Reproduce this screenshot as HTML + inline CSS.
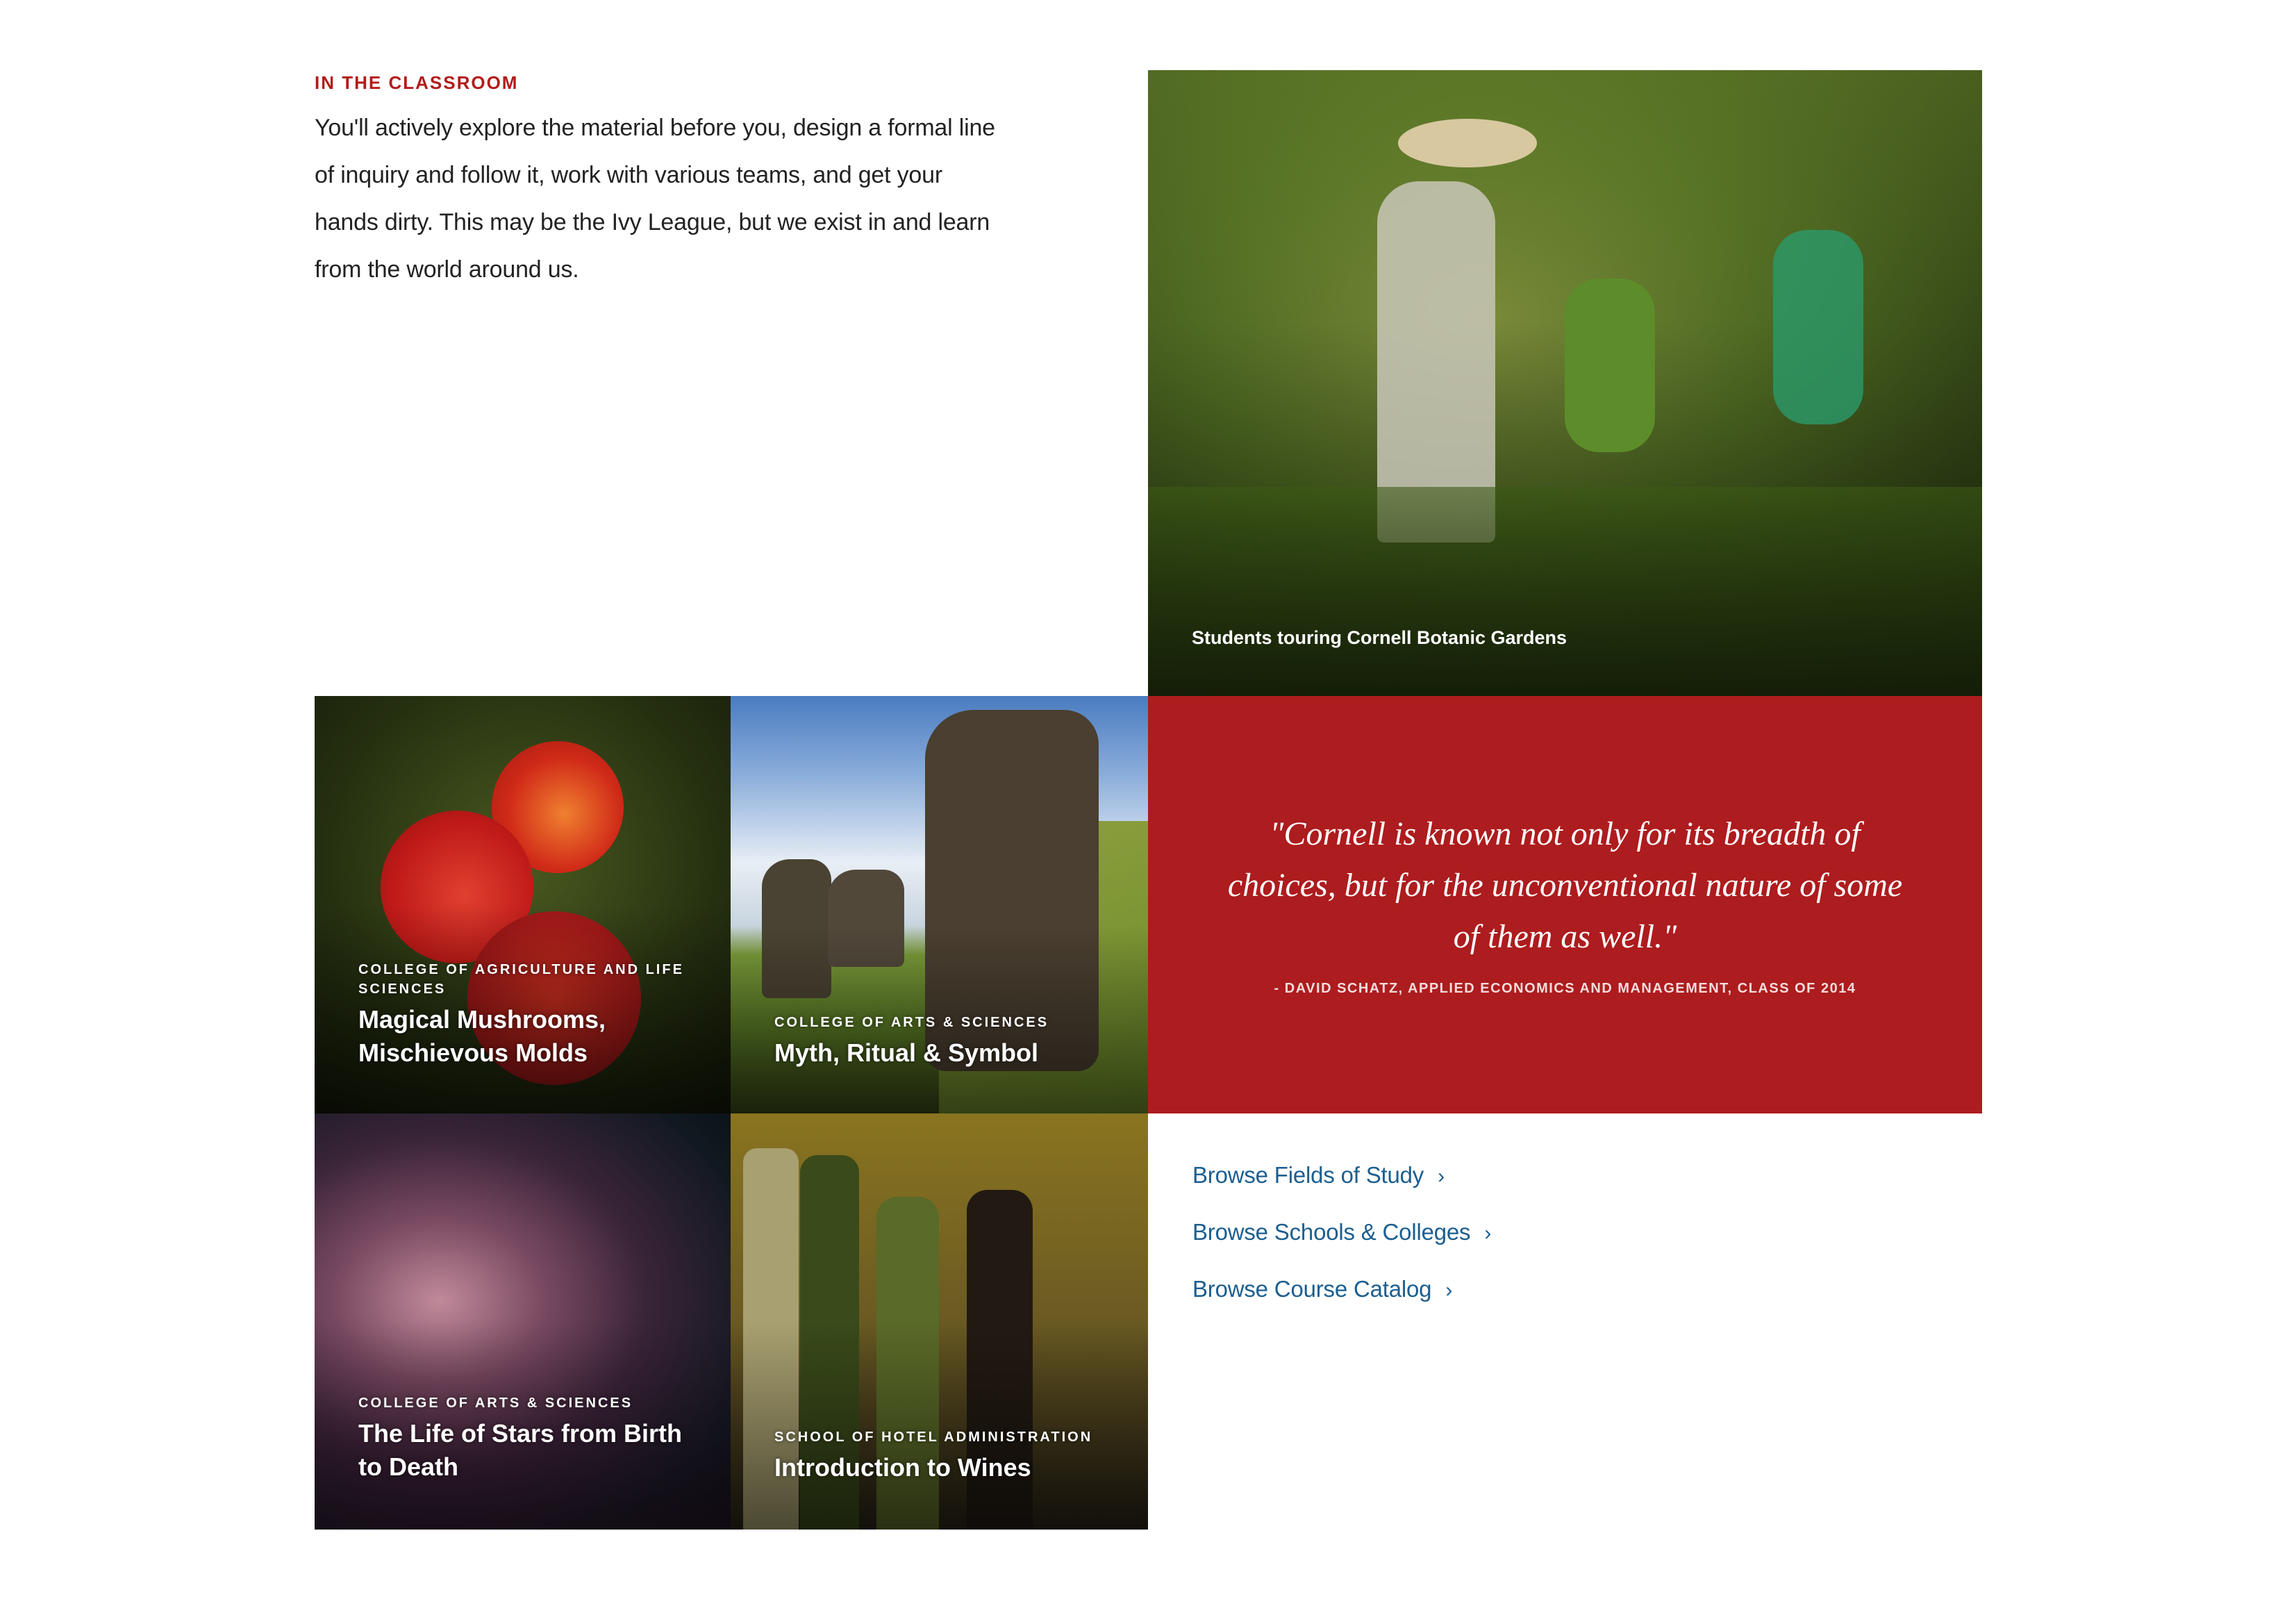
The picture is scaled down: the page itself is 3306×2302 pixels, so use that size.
<!DOCTYPE html>
<html><head><meta charset="utf-8"><style>
*{margin:0;padding:0;box-sizing:border-box}
body{width:3306px;height:2302px;background:#fff;position:relative;overflow:hidden;font-family:"Liberation Sans",sans-serif}
.abs{position:absolute}
.label{left:453px;top:104px;font-size:26px;font-weight:bold;color:#b31b1b;letter-spacing:2px}
.body{left:453px;top:150px;font-size:34px;line-height:68px;color:#222;letter-spacing:-0.2px;white-space:nowrap}
.tile{position:absolute;overflow:hidden}
.cap{position:absolute;left:63px;color:#fff;text-shadow:0 0 6px rgba(0,0,0,.6)}
.cap .s{font-size:20px;font-weight:bold;letter-spacing:3px;line-height:28px}
.cap .t{font-size:36px;font-weight:bold;line-height:48px;margin-top:6px}
.link{left:1717px;font-size:33px;color:#1c5e8f;letter-spacing:-0.2px}
.link span{font-size:30px;margin-left:20px;color:#1c5e8f}
</style></head><body>
<div class="abs label">IN THE CLASSROOM</div>
<div class="abs body">You'll actively explore the material before you, design a formal line<br>of inquiry and follow it, work with various teams, and get your<br>hands dirty. This may be the Ivy League, but we exist in and learn<br>from the world around us.</div>

<div class="tile" style="left:1653px;top:101px;width:1201px;height:901px;background:radial-gradient(ellipse at 40% 40%,#7a8a3a 0%,#4f6a22 40%,#2e3f14 80%,#1f2a0e 100%)">
<div class="abs" style="left:0;top:0;width:1201px;height:901px;background:linear-gradient(180deg,rgba(120,150,50,.4),rgba(0,0,0,0) 40%,rgba(0,0,0,.55))"></div>
<div class="abs" style="left:330px;top:160px;width:170px;height:520px;background:#c9c7b8;border-radius:60px 60px 10px 10px;opacity:.85"></div>
<div class="abs" style="left:360px;top:70px;width:200px;height:70px;background:#d8c8a0;border-radius:50%"></div>
<div class="abs" style="left:600px;top:300px;width:130px;height:250px;background:#5c8d2a;border-radius:50px"></div>
<div class="abs" style="left:900px;top:230px;width:130px;height:280px;background:#2a9a6a;border-radius:50px;opacity:.8"></div>
<div class="abs" style="left:0;top:600px;width:1201px;height:301px;background:linear-gradient(180deg,rgba(60,90,20,.6),rgba(20,30,8,.9))"></div>
<div class="abs" style="left:63px;top:802px;font-size:27px;font-weight:bold;color:#fff">Students touring Cornell Botanic Gardens</div>
</div>

<div class="tile" style="left:453px;top:1002px;width:599px;height:601px;background:radial-gradient(circle at 50% 40%,#4a5a20,#253010 60%,#151a08)">
<div class="abs" style="left:255px;top:65px;width:190px;height:190px;border-radius:50%;background:radial-gradient(circle at 55% 55%,#f08030,#d02a18 55%,#a01810)"></div>
<div class="abs" style="left:95px;top:165px;width:220px;height:220px;border-radius:50%;background:radial-gradient(circle at 55% 55%,#e04030,#c01a18 60%,#901010)"></div>
<div class="abs" style="left:220px;top:310px;width:250px;height:250px;border-radius:50%;background:radial-gradient(circle,#d03020,#a01818 70%,#701010)"></div>
<div class="abs" style="left:0;top:0;width:599px;height:601px;background:linear-gradient(180deg,rgba(0,0,0,0) 50%,rgba(0,0,0,.6))"></div>
<div class="cap" style="top:380px"><div class="s">COLLEGE OF AGRICULTURE AND LIFE<br>SCIENCES</div><div class="t">Magical Mushrooms,<br>Mischievous Molds</div></div>
</div>

<div class="tile" style="left:1052px;top:1002px;width:601px;height:601px;background:linear-gradient(180deg,#4a7cc0 0%,#8fb0dc 20%,#e8eef5 40%,#c8d4de 55%,#7a9a3a 62%,#5a7a25 80%,#3a4a18)">
<div class="abs" style="left:300px;top:180px;width:301px;height:421px;background:linear-gradient(160deg,#8fa040,#6a8a28)"></div>
<div class="abs" style="left:280px;top:20px;width:250px;height:520px;background:#4a3f30;border-radius:70px 50px 30px 30px"></div>
<div class="abs" style="left:45px;top:235px;width:100px;height:200px;background:#4a4232;border-radius:40px 30px 10px 10px"></div>
<div class="abs" style="left:140px;top:250px;width:110px;height:140px;background:#51483a;border-radius:40px 30px 10px 10px"></div>
<div class="abs" style="left:0;top:0;width:601px;height:601px;background:linear-gradient(180deg,rgba(0,0,0,0) 55%,rgba(0,0,0,.55))"></div>
<div class="cap" style="top:456px"><div class="s">COLLEGE OF ARTS &amp; SCIENCES</div><div class="t">Myth, Ritual &amp; Symbol</div></div>
</div>

<div class="tile" style="left:1653px;top:1002px;width:1201px;height:601px;background:#ad1c1e">
<div class="abs" style="left:0;top:162px;width:1201px;text-align:center;font-family:'Liberation Serif',serif;font-style:italic;font-size:48px;line-height:74px;color:#fff">"Cornell is known not only for its breadth of<br>choices, but for the unconventional nature of some<br>of them as well."</div>
<div class="abs" style="left:0;top:410px;width:1201px;text-align:center;font-size:20px;font-weight:bold;letter-spacing:1.5px;color:#f4dcdc">- DAVID SCHATZ, APPLIED ECONOMICS AND MANAGEMENT, CLASS OF 2014</div>
</div>

<div class="tile" style="left:453px;top:1603px;width:599px;height:599px;background:radial-gradient(ellipse at 30% 45%,#c08a9a 0%,#7a4a62 25%,#3a2438 50%,#101820 80%,#0a0e14)">
<div class="abs" style="left:0;top:0;width:599px;height:599px;background:linear-gradient(180deg,rgba(0,0,0,0) 50%,rgba(20,5,15,.6))"></div>
<div class="cap" style="top:403px"><div class="s">COLLEGE OF ARTS &amp; SCIENCES</div><div class="t">The Life of Stars from Birth<br>to Death</div></div>
</div>

<div class="tile" style="left:1052px;top:1603px;width:601px;height:599px;background:linear-gradient(180deg,#8a7420,#6a5a22 50%,#2a2418)">
<div class="abs" style="left:18px;top:50px;width:80px;height:549px;background:#a8a070;border-radius:20px 20px 0 0"></div>
<div class="abs" style="left:100px;top:60px;width:85px;height:539px;background:#3a4a1a;border-radius:25px 25px 0 0"></div>
<div class="abs" style="left:210px;top:120px;width:90px;height:479px;background:#5a6a28;border-radius:30px 30px 0 0"></div>
<div class="abs" style="left:340px;top:110px;width:95px;height:489px;background:#221a12;border-radius:30px 30px 0 0"></div>
<div class="abs" style="left:0;top:0;width:601px;height:599px;background:linear-gradient(180deg,rgba(0,0,0,0) 50%,rgba(0,0,0,.55))"></div>
<div class="cap" style="top:452px"><div class="s">SCHOOL OF HOTEL ADMINISTRATION</div><div class="t">Introduction to Wines</div></div>
</div>

<div class="abs link" style="top:1673px">Browse Fields of Study<span>›</span></div>
<div class="abs link" style="top:1755px">Browse Schools &amp; Colleges<span>›</span></div>
<div class="abs link" style="top:1837px">Browse Course Catalog<span>›</span></div>
</body></html>
